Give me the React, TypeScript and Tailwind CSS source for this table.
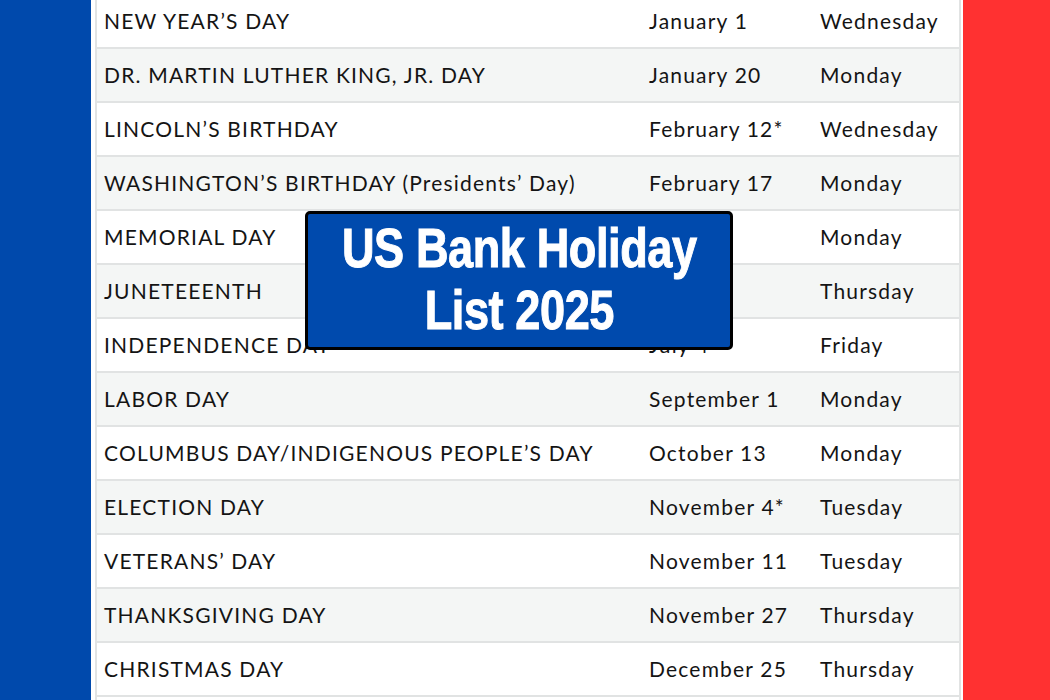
import React from 'react';

const holidays = [
  { name: 'NEW YEAR’S DAY', date: 'January 1', day: 'Wednesday' },
  { name: 'DR. MARTIN LUTHER KING, JR. DAY', date: 'January 20', day: 'Monday' },
  { name: 'LINCOLN’S BIRTHDAY', date: 'February 12*', day: 'Wednesday' },
  { name: 'WASHINGTON’S BIRTHDAY (Presidents’ Day)', date: 'February 17', day: 'Monday' },
  { name: 'MEMORIAL DAY', date: 'May 26', day: 'Monday' },
  { name: 'JUNETEEENTH', date: 'June 19', day: 'Thursday' },
  { name: 'INDEPENDENCE DAY', date: 'July 4', day: 'Friday' },
  { name: 'LABOR DAY', date: 'September 1', day: 'Monday' },
  { name: 'COLUMBUS DAY/INDIGENOUS PEOPLE’S DAY', date: 'October 13', day: 'Monday' },
  { name: 'ELECTION DAY', date: 'November 4*', day: 'Tuesday' },
  { name: 'VETERANS’ DAY', date: 'November 11', day: 'Tuesday' },
  { name: 'THANKSGIVING DAY', date: 'November 27', day: 'Thursday' },
  { name: 'CHRISTMAS DAY', date: 'December 25', day: 'Thursday' },
];

const App: React.FC = () => {
  return (
    <div className="relative flex h-[700px] w-[1050px] overflow-hidden bg-white">
      {/* left flag band */}
      <div className="w-[91px] shrink-0 bg-[#0049ac]" />
      <div className="w-[4px] shrink-0" />

      {/* Holiday table */}
      <div className="-mt-[5px] w-[866px] shrink-0 border-x-2 border-[#e1e3e3] font-['Lato',sans-serif] text-[21px] tracking-[1.2px] text-[#141414]">
        {holidays.map((h, i) => (
          <div
            key={h.name}
            className={`flex h-[54px] items-center whitespace-nowrap border-b-2 border-[#e1e3e3] ${
              i % 2 === 1 ? 'bg-[#f4f6f5]' : 'bg-white'
            }`}
          >
            <div className="w-[543px] pl-[7px]">{h.name}</div>
            <div className="w-[171px] pl-[9px]">{h.date}</div>
            <div className="flex-1 pl-[9px]">{h.day}</div>
          </div>
        ))}
      </div>

      <div className="w-[2px] shrink-0" />
      {/* right flag band */}
      <div className="flex-1 bg-[#ff3131]" />

      {/* Title badge */}
      <div className="absolute left-[305px] top-[211px] flex h-[139px] w-[428px] items-center justify-center rounded-[5px] border-[3px] border-black bg-[#004aad]">
        <div className="-mt-[4px] flex scale-x-[0.82] flex-col items-center whitespace-nowrap font-['Liberation_Sans',sans-serif] text-[55px] font-bold leading-[62px] tracking-[-0.5px] text-white [-webkit-text-stroke:1px_white]">
          <div>US Bank Holiday</div>
          <div>List 2025</div>
        </div>
      </div>
    </div>
  );
};

export default App;
